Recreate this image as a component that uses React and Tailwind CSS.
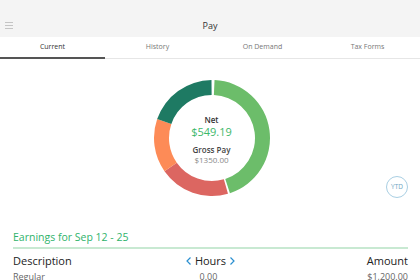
import React from "react";

const CX = 59, CY = 59, RO = 58, RI = 43;
function pt(r, deg) {
  const a = (deg - 90) * Math.PI / 180;
  return [CX + r * Math.cos(a), CY + r * Math.sin(a)];
}
function arc(a0, a1) {
  const large = a1 - a0 > 180 ? 1 : 0;
  const [x0, y0] = pt(RO, a0);
  const [x1, y1] = pt(RO, a1);
  const [x2, y2] = pt(RI, a1);
  const [x3, y3] = pt(RI, a0);
  return `M${x0} ${y0} A${RO} ${RO} 0 ${large} 1 ${x1} ${y1} L${x2} ${y2} A${RI} ${RI} 0 ${large} 0 ${x3} ${y3} Z`;
}

export default function App() {
  const tabs = ["Current", "History", "On Demand", "Tax Forms"];
  return (
    <div className="w-[420px] h-[280px] overflow-hidden bg-white" style={{ fontFamily: '"Open Sans", sans-serif' }}>
      <div className="h-[37px] bg-[#f4f4f4] flex items-center relative pt-[2px]">
        <div className="absolute left-[5px] top-[22px] flex flex-col gap-[2px]">
          <div className="w-[8px] h-[1px] bg-[#c4c4c4]" />
          <div className="w-[8px] h-[1px] bg-[#c4c4c4]" />
          <div className="w-[8px] h-[1px] bg-[#c4c4c4]" />
        </div>
        <div className="flex-1 text-center text-[9px] text-[#333] mt-[13px]">Pay</div>
      </div>
      <div className="flex h-[22px] border-b border-[#e6e6e6]">
        {tabs.map((t, i) => (
          <div key={t} className={`flex-1 flex items-center justify-center text-[7px] relative ${i === 0 ? "text-[#333]" : "text-[#777]"}`}>
            {t}
            {i === 0 && <div className="absolute left-0 right-0 bottom-[-1px] h-[2px] bg-[#555]" />}
          </div>
        ))}
      </div>
      <div className="relative h-[171px] flex justify-center pt-[20px]">
        <div className="relative w-[118px] h-[118px] ml-[3px]">
          <svg width="118" height="118" viewBox="0 0 118 118">
            <path d={arc(2.5, 162)} fill="#6cbd6a" />
            <path d={arc(164, 235)} fill="#dc6661" />
            <path d={arc(235, 289)} fill="#fd8b57" />
            <path d={arc(289, 359.5)} fill="#1e7a63" />
          </svg>
          <div className="absolute inset-0 flex flex-col items-center pt-[36px]">
            <div className="text-[8px] font-semibold text-[#333] leading-[10px]">Net</div>
            <div className="text-[11px] text-[#3db86a] leading-[14px]">$549.19</div>
            <div className="text-[8px] font-semibold text-[#444] leading-[10px] mt-[6px]">Gross Pay</div>
            <div className="text-[8px] text-[#888] leading-[10px]">$1350.00</div>
          </div>
        </div>
        <div className="absolute left-[386px] top-[117px] w-[22px] h-[22px] rounded-full border border-[#a9cfe3] flex items-center justify-center text-[6.5px] text-[#6fa5c2]">YTD</div>
      </div>
      <div className="px-[13px] pr-[12px]">
        <div className="text-[10.5px] text-[#2fb36b] leading-[15px] pb-[2px] border-b-2 border-[#c8e9d2]">Earnings for Sep 12 - 25</div>
        <div className="flex items-center h-[18px] text-[11px] text-[#222] mt-[3px]">
          <div className="flex-1">Description</div>
          <div className="flex items-center gap-[2px]">
            <svg width="8" height="10" viewBox="0 0 8 10"><path d="M5.5 1.5 L2 5 L5.5 8.5" fill="none" stroke="#2a8fd0" strokeWidth="1.2" /></svg>
            <span>Hours</span>
            <svg width="8" height="10" viewBox="0 0 8 10"><path d="M2.5 1.5 L6 5 L2.5 8.5" fill="none" stroke="#2a8fd0" strokeWidth="1.2" /></svg>
          </div>
          <div className="flex-1 text-right">Amount</div>
        </div>
        <div className="flex items-center h-[14px] text-[9px] text-[#666]">
          <div className="flex-1">Regular</div>
          <div className="pr-[4px]">0.00</div>
          <div className="flex-1 text-right">$1,200.00</div>
        </div>
      </div>
    </div>
  );
}
